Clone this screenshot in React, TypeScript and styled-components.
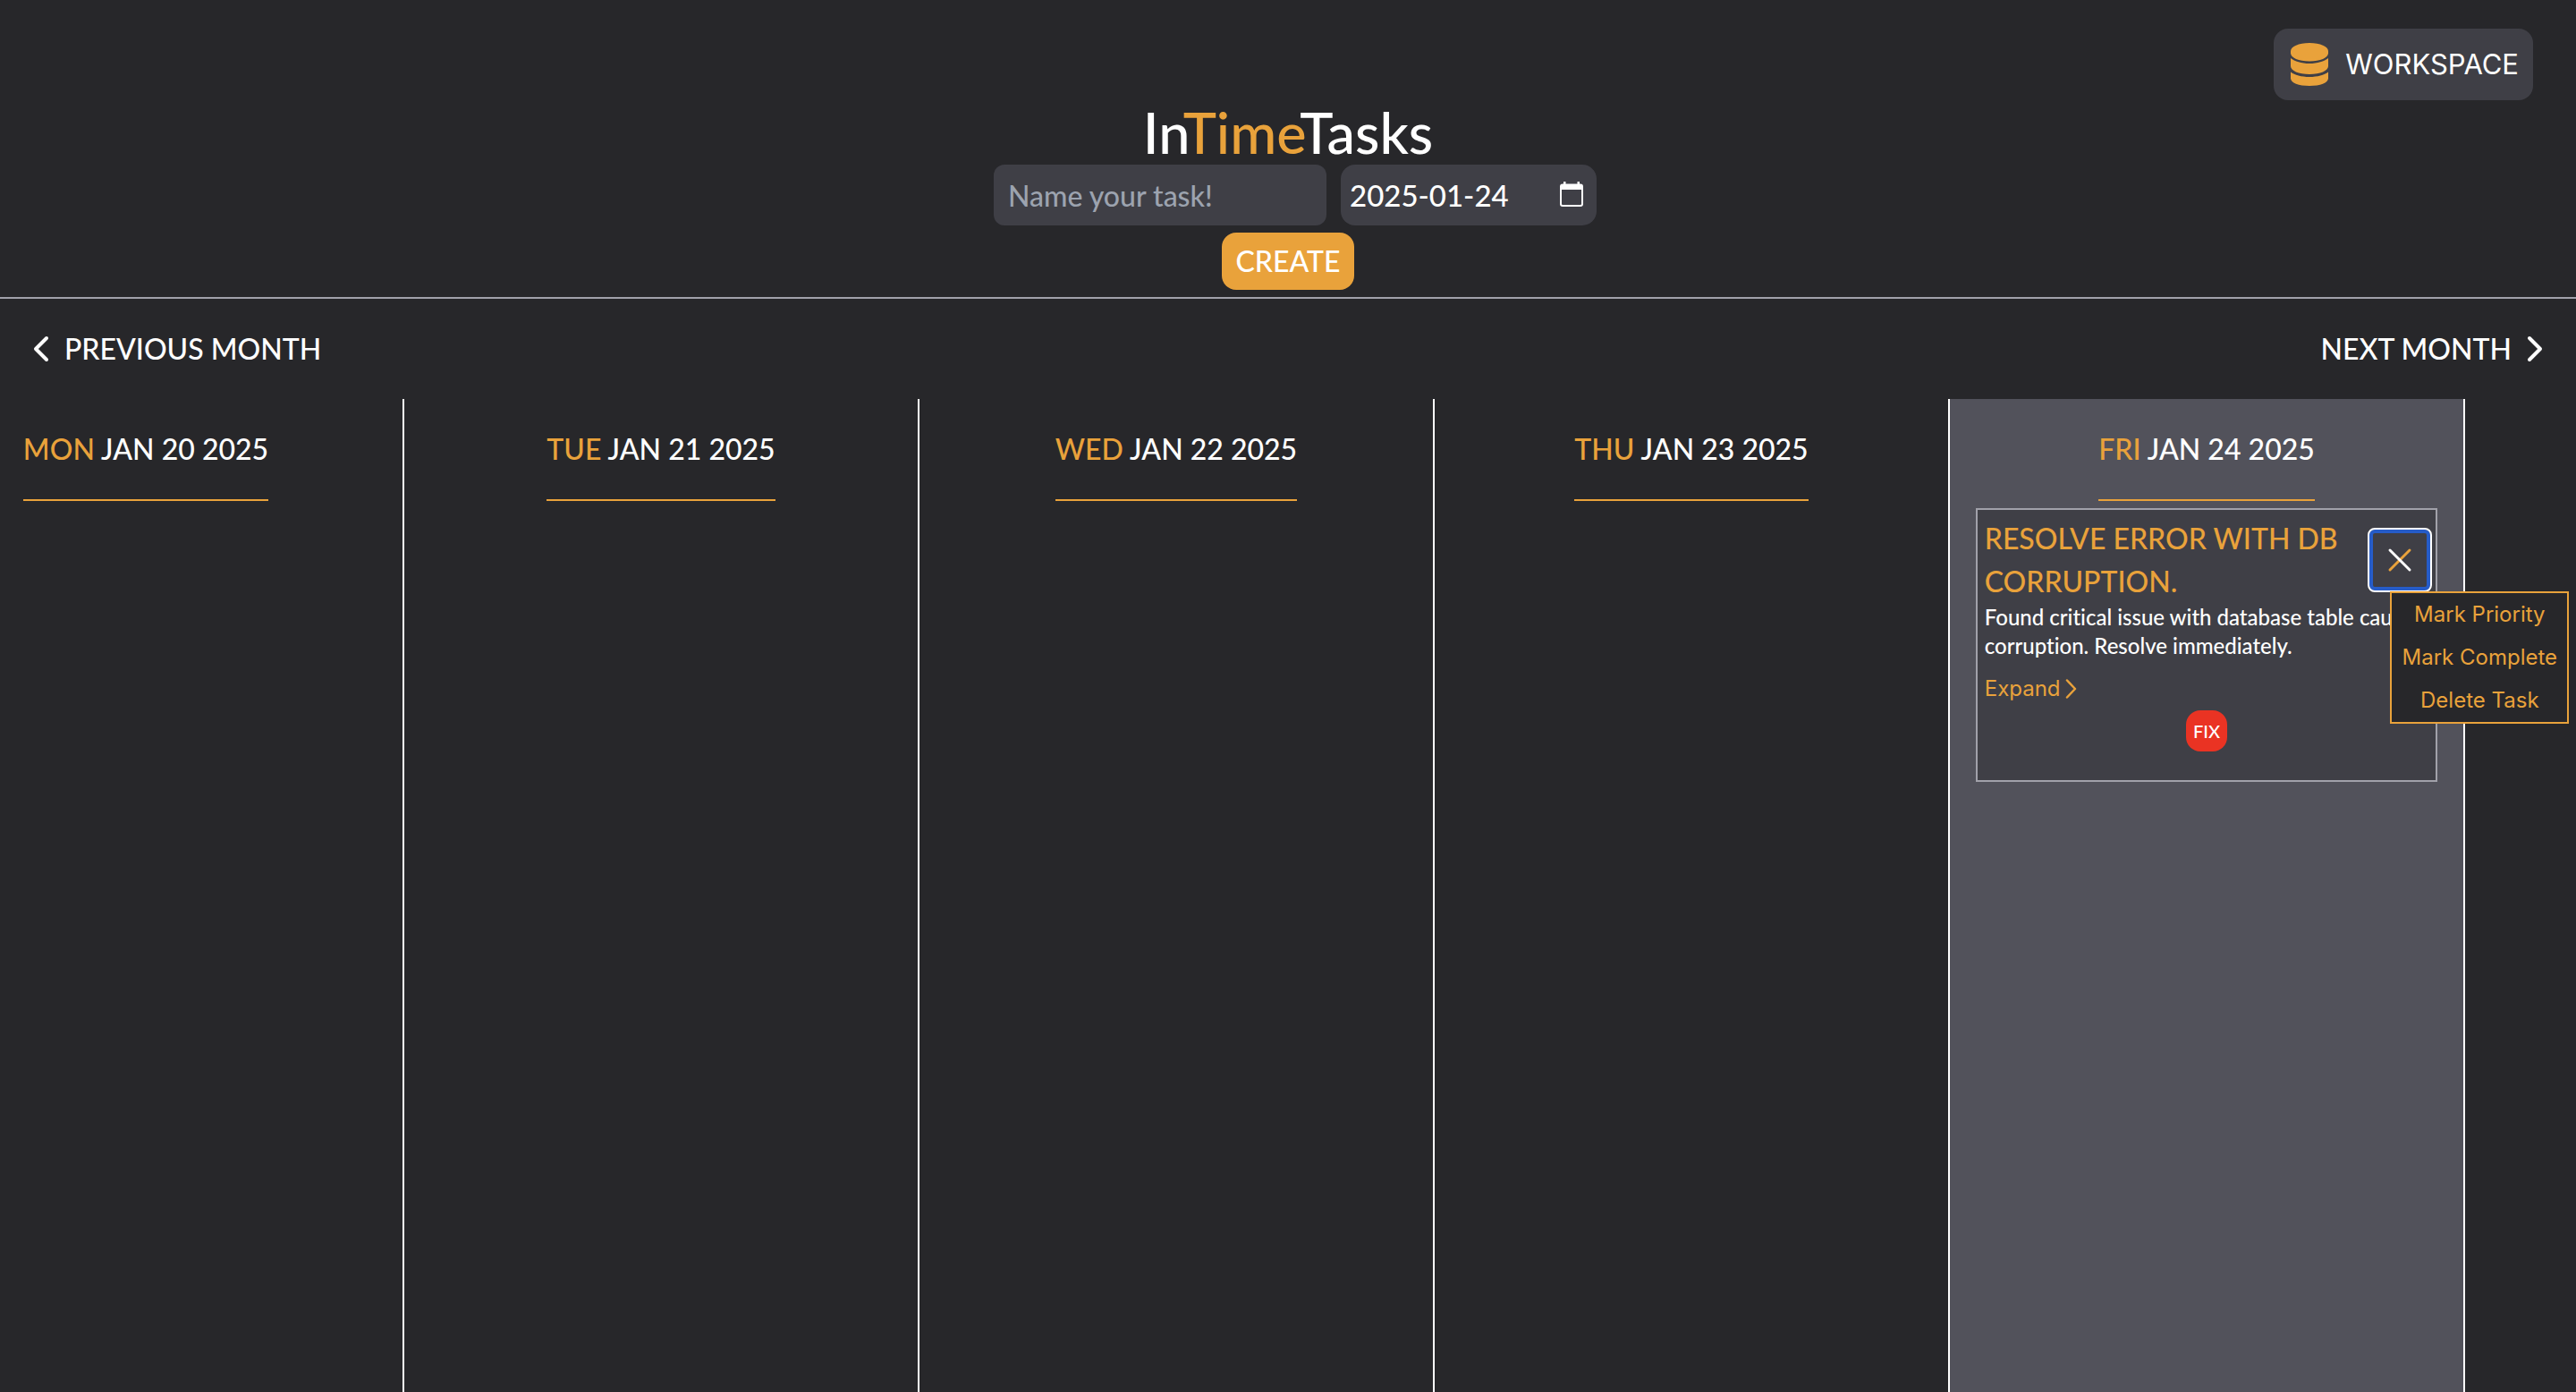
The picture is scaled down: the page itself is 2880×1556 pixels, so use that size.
import React, { useLayoutEffect, useRef } from "react";
import styled, { createGlobalStyle, css } from "styled-components";

const color = {
  page: "#27272a",
  panel: "#3f3f46",
  today: "#52525b",
  line: "#a1a1aa",
  accent: "#e9a23b",
  red: "#ea3323",
  focus: "#265cc8",
};

const ui = '"Inter", "Liberation Sans", sans-serif';
const display = '"Lato", "Liberation Sans", sans-serif';

const GlobalStyle = createGlobalStyle`
  *, *::before, *::after { box-sizing: border-box; }
  html, body, #root { height: 100%; }
  body {
    margin: 0;
    background: ${color.page};
    color: #fff;
    font-family: ${display};
    font-size: 32px;
    font-weight: 500;
    line-height: 48px;
    font-variant-ligatures: no-common-ligatures;
  }
  button, input { font: inherit; color: inherit; border: 0; margin: 0; }
  button { background: none; padding: 0; cursor: pointer; }
  h1, h2, h3, p, ul { margin: 0; padding: 0; font-weight: inherit; font-size: inherit; }
`;

const Page = styled.div`
  display: flex;
  flex-direction: column;
  min-height: 100%;
`;

const TopBar = styled.header`
  display: flex;
  flex-direction: column;
  align-items: center;
  padding: 32px 48px 8px;
  border-bottom: 2px solid ${color.line};
`;

const WorkspaceButton = styled.button`
  display: flex;
  align-items: center;
  align-self: flex-end;
  gap: 16px;
  height: 80px;
  padding: 0 16px;
  border-radius: 16px;
  background: ${color.panel};
  font-family: ${ui};
  font-size: 31px;
  font-weight: 400;
`;

const Title = styled.h1`
  font-size: 63px;
  line-height: 72px;
`;

const Accent = styled.span`
  color: ${color.accent};
`;

const TaskForm = styled.form`
  display: flex;
  flex-direction: column;
  align-items: center;
  gap: 8px;
`;

const Fields = styled.div`
  display: flex;
  gap: 16px;
  padding-left: 16px;
`;

const NameInput = styled.input`
  width: 372px;
  height: 68px;
  padding: 0 16px;
  border-radius: 12px;
  background: ${color.panel};
  &::placeholder { color: #9ca3af; opacity: 1; }
`;

const DateField = styled.div`
  display: flex;
  align-items: center;
  width: 286px;
  height: 68px;
  padding: 0 12px 0 10px;
  border-radius: 16px;
  background: ${color.panel};
`;

const DateInput = styled.input`
  flex: 1;
  min-width: 0;
  padding: 0;
  background: none;
  font-size: 33px;
`;

const IconButton = styled.button`
  display: flex;
`;

const CreateButton = styled.button`
  height: 64px;
  padding: 0 16px;
  border-radius: 16px;
  background: ${color.accent};
`;

const MonthNav = styled.nav`
  display: flex;
  justify-content: space-between;
  padding: 32px;
`;

const MonthButton = styled.button`
  display: flex;
  align-items: center;
  gap: 12px;
`;

const Week = styled.main`
  flex: 1;
  display: flex;
  overflow-x: auto;
  scrollbar-width: none;
`;

const Day = styled.section<{ $today?: boolean }>`
  flex: 0 0 20%;
  display: flex;
  flex-direction: column;
  align-items: center;
  gap: 8px;
  padding-top: 32px;
  border-right: 2px solid #fff;
  ${(p) => p.$today && css`background: ${color.today};`}
`;

const DayTitle = styled.h2`
  padding-bottom: 32px;
  border-bottom: 2px solid ${color.accent};
`;

const Card = styled.article`
  position: relative;
  width: 90%;
  padding: 8px 8px 32px;
  border: 2px solid ${color.line};
  background: ${color.panel};
`;

const CardTitle = styled.h3`
  padding-right: 80px;
  color: ${color.accent};
`;

const CardText = styled.p`
  margin-right: -8px;
  font-size: 24px;
  line-height: 32px;
`;

const ExpandButton = styled.button`
  display: flex;
  align-items: center;
  margin: 16px 0 8px;
  color: ${color.accent};
  font-family: ${ui};
  font-size: 24px;
  font-weight: 400;
  line-height: 32px;
`;

const Tag = styled.span`
  display: block;
  width: fit-content;
  margin: 0 auto;
  padding: 0 8px;
  border-radius: 16px;
  background: ${color.red};
  font-size: 20px;
  line-height: 46px;
`;

const MenuAnchor = styled.div`
  position: absolute;
  top: 20px;
  right: 4px;
`;

const MenuToggle = styled.button`
  display: flex;
  align-items: center;
  justify-content: center;
  width: 72px;
  height: 72px;
  border: 2px solid #fff;
  border-radius: 8px;
  box-shadow: inset 0 0 0 4px ${color.focus};
`;

const Menu = styled.ul`
  position: absolute;
  z-index: 1;
  top: 71px;
  left: 25px;
  width: 200px;
  list-style: none;
  border: 2px solid ${color.accent};
  background: ${color.page};
`;

const MenuItem = styled.button`
  display: block;
  width: 100%;
  color: ${color.accent};
  font-family: ${ui};
  font-size: 24px;
  font-weight: 400;
  line-height: 48px;
  white-space: nowrap;
`;

const DatabaseIcon = () => (
  <svg width="48" height="48" viewBox="0 0 48 48" fill={color.accent} aria-hidden="true">
    <path d="M3 9C3 4 12 0 24 0s21 4 21 9v2.500c0 5-9 9-21 9s-21-4-21-9z" />
    <path d="M3 17c4.500 3.600 12 6 21 6s16.500-2.400 21-6v9c0 5-9 9-21 9s-21-4-21-9z" />
    <path d="M3 32.500c4.500 3.300 12 5.500 21 5.500s16.500-2.200 21-5.500V39.500c0 5-9 8.500-21 8.500s-21-3.500-21-8.500z" />
  </svg>
);

const CalendarIcon = () => (
  <svg width="32" height="32" viewBox="0 0 32 32" fill="#fff" aria-hidden="true">
    <path
      fillRule="evenodd"
      d="M7 1h2.500v2.500h13V1H25v2.500h1a3 3 0 0 1 3 3V26a3 3 0 0 1-3 3H6a3 3 0 0 1-3-3V6.500a3 3 0 0 1 3-3h1zM5 10v16a1 1 0 0 0 1 1h20a1 1 0 0 0 1-1V10z"
    />
  </svg>
);

const MonthChevron = ({ d }: { d: string }) => (
  <svg width="28" height="32" viewBox="0 0 28 32" fill="none" stroke="#fff" strokeWidth="4" strokeLinecap="round" strokeLinejoin="round" aria-hidden="true">
    <path d={d} />
  </svg>
);

const ExpandIcon = () => (
  <svg width="24" height="24" viewBox="0 0 24 24" fill="none" stroke={color.accent} strokeWidth="2.500" strokeLinecap="round" strokeLinejoin="round" aria-hidden="true">
    <path d="M7 2.500 16 12l-9 9.500" />
  </svg>
);

const CrossIcon = () => (
  <svg width="32" height="32" viewBox="0 0 32 32" strokeWidth="3" strokeLinecap="round" aria-hidden="true">
    <path d="M27 5 5 27" stroke={color.accent} />
    <path d="m5 5 22 22" stroke="#fff" />
  </svg>
);

const days = [
  { name: "MON", date: "JAN 20 2025" },
  { name: "TUE", date: "JAN 21 2025" },
  { name: "WED", date: "JAN 22 2025" },
  { name: "THU", date: "JAN 23 2025" },
  { name: "FRI", date: "JAN 24 2025", today: true },
];

const TaskCard = () => (
  <Card>
    <CardTitle>RESOLVE ERROR WITH DB CORRUPTION.</CardTitle>
    <CardText>
      Found critical issue with database table causing corruption. Resolve immediately.
    </CardText>
    <ExpandButton type="button">
      Expand
      <ExpandIcon />
    </ExpandButton>
    <Tag>FIX</Tag>
    <MenuAnchor>
      <MenuToggle type="button" aria-label="Close task menu" aria-expanded="true">
        <CrossIcon />
      </MenuToggle>
      <Menu>
        {["Mark Priority", "Mark Complete", "Delete Task"].map((label) => (
          <li key={label}>
            <MenuItem type="button">{label}</MenuItem>
          </li>
        ))}
      </Menu>
    </MenuAnchor>
  </Card>
);

export default function App() {
  const week = useRef<HTMLElement>(null);

  useLayoutEffect(() => {
    if (week.current) week.current.scrollLeft = 124;
  }, []);

  return (
    <Page>
      <GlobalStyle />
      <TopBar>
        <WorkspaceButton type="button">
          <DatabaseIcon />
          WORKSPACE
        </WorkspaceButton>
        <Title>
          In<Accent>Time</Accent>Tasks
        </Title>
        <TaskForm onSubmit={(e) => e.preventDefault()}>
          <Fields>
            <NameInput type="text" aria-label="Task name" placeholder="Name your task!" />
            <DateField>
              <DateInput type="text" aria-label="Task date" defaultValue="2025-01-24" />
              <IconButton type="button" aria-label="Pick a date">
                <CalendarIcon />
              </IconButton>
            </DateField>
          </Fields>
          <CreateButton type="submit">CREATE</CreateButton>
        </TaskForm>
      </TopBar>
      <MonthNav>
        <MonthButton type="button">
          <MonthChevron d="M20 4 8 16l12 12" />
          PREVIOUS MONTH
        </MonthButton>
        <MonthButton type="button">
          NEXT MONTH
          <MonthChevron d="m8 4 12 12L8 28" />
        </MonthButton>
      </MonthNav>
      <Week ref={week}>
        {days.map((day) => (
          <Day key={day.name} $today={day.today}>
            <DayTitle>
              <Accent>{day.name}</Accent> {day.date}
            </DayTitle>
            {day.today && <TaskCard />}
          </Day>
        ))}
        <Day />
      </Week>
    </Page>
  );
}
